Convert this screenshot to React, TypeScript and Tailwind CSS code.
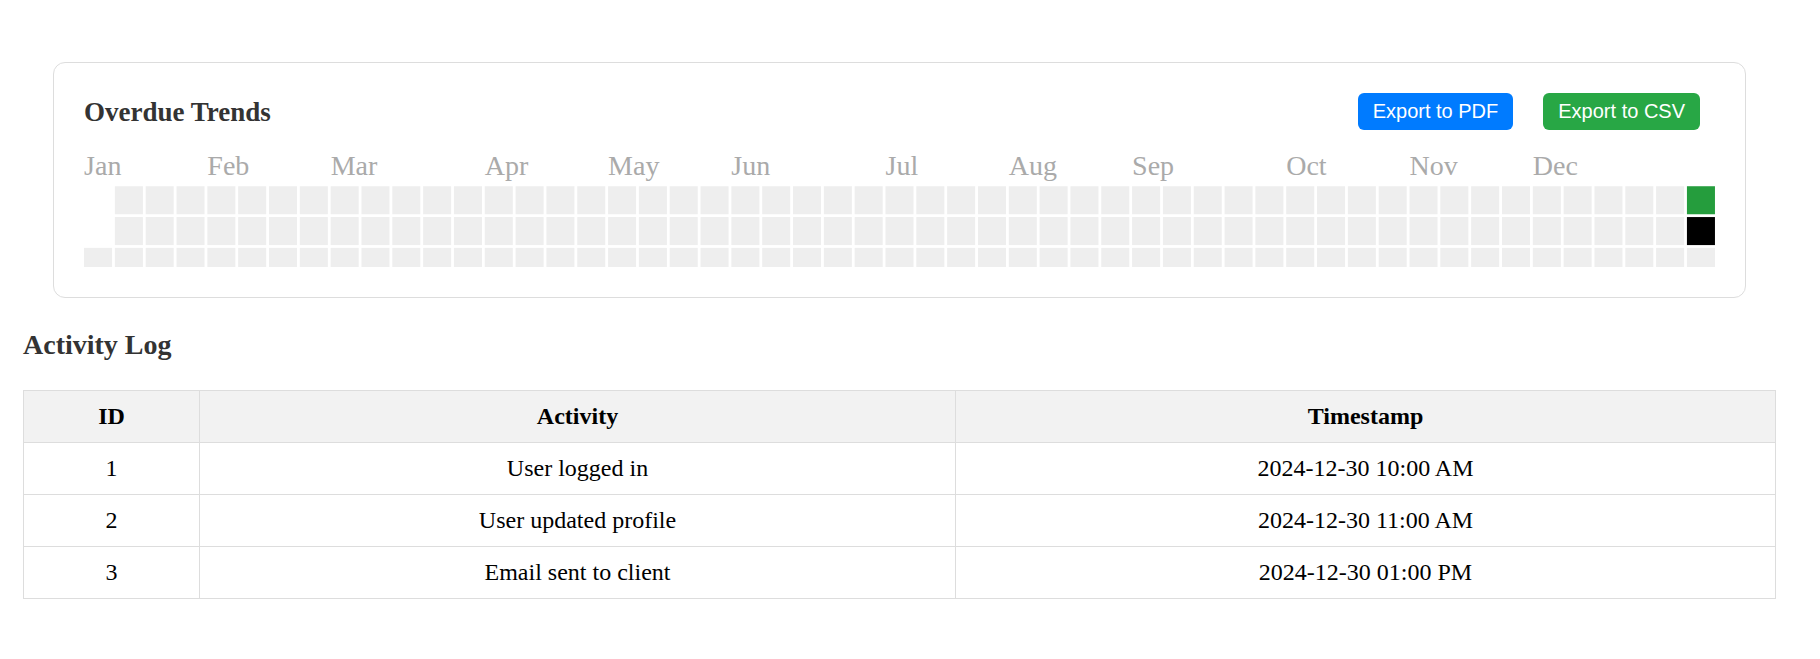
import React from "react"

interface LogRow {
  id: number
  activity: string
  timestamp: string
}

const rows: LogRow[] = [
  { id: 1, activity: "User logged in", timestamp: "2024-12-30 10:00 AM" },
  { id: 2, activity: "User updated profile", timestamp: "2024-12-30 11:00 AM" },
  { id: 3, activity: "Email sent to client", timestamp: "2024-12-30 01:00 PM" },
]

// week index where each month label sits (same rule as react-calendar-heatmap)
const monthLabels: [string, number][] = [
  ["Jan", 0],
  ["Feb", 4],
  ["Mar", 8],
  ["Apr", 13],
  ["May", 17],
  ["Jun", 21],
  ["Jul", 26],
  ["Aug", 30],
  ["Sep", 34],
  ["Oct", 39],
  ["Nov", 43],
  ["Dec", 47],
]

const WEEKS = 53
const SQUARE = 10
const GUTTER = 1
const LABEL_SIZE = 14

function Heatmap() {
  const cells: React.ReactNode[] = []
  for (let w = 0; w < WEEKS; w++) {
    for (let d = 0; d < 7; d++) {
      // range starts on Tue Jan 2 and ends on Tue Dec 31
      if (w === 0 && d < 2) continue
      if (w === WEEKS - 1 && d > 2) continue
      let fill = "#eeeeee"
      if (w === WEEKS - 1 && d === 0) fill = "#259d3d"
      if (w === WEEKS - 1 && d === 1) fill = "#000000"
      cells.push(
        <rect
          key={`${w}-${d}`}
          x={w * (SQUARE + GUTTER)}
          y={d * (SQUARE + GUTTER)}
          width={SQUARE}
          height={SQUARE}
          fill={fill}
        />
      )
    }
  }

  const width = WEEKS * (SQUARE + GUTTER) - GUTTER
  const height = 7 * (SQUARE + GUTTER) - GUTTER + LABEL_SIZE

  return (
    <div className="mt-[17px] h-[120px] overflow-hidden">
      <svg className="block w-full" viewBox={`0 0 ${width} ${height}`}>
        <g>
          {monthLabels.map(([label, week]) => (
            <text key={label} x={week * (SQUARE + GUTTER)} y={10} fontSize={10} fill="#aaaaaa">
              {label}
            </text>
          ))}
        </g>
        <g transform={`translate(0, ${LABEL_SIZE})`}>{cells}</g>
      </svg>
    </div>
  )
}

export default function App() {
  return (
    <div className="min-h-screen bg-white pl-[23px] pr-[44px] pt-[62px] font-['Liberation_Serif',serif]">
      <div className="ml-[30px] mr-[30px] rounded-[12px] border border-[#dddddd] p-[30px]">
        <div className="flex items-center justify-between">
          <h3 className="text-[27px] font-bold leading-[30px] text-[#333333]">Overdue Trends</h3>
          <div className="flex items-center">
            <button className="mx-[15px] h-[37px] rounded-[6px] bg-[#007bff] px-[15px] font-['Liberation_Sans',Arial,sans-serif] text-[20px] leading-[23px] text-white">
              Export to PDF
            </button>
            <button className="mx-[15px] h-[37px] rounded-[6px] bg-[#28a745] px-[15px] font-['Liberation_Sans',Arial,sans-serif] text-[20px] leading-[23px] text-white">
              Export to CSV
            </button>
          </div>
        </div>
        <Heatmap />
      </div>

      <h3 className="mt-[31px] text-[28px] font-bold leading-[32px] text-[#333333]">Activity Log</h3>

      <table className="mt-[29px] w-full border-collapse text-[24px] leading-[27px] text-black">
        <thead>
          <tr className="bg-[#f2f2f2]">
            <th className="w-[176px] border border-[#dddddd] py-3 font-bold">ID</th>
            <th className="w-[756px] border border-[#dddddd] py-3 font-bold">Activity</th>
            <th className="border border-[#dddddd] py-3 font-bold">Timestamp</th>
          </tr>
        </thead>
        <tbody>
          {rows.map((row) => (
            <tr key={row.id}>
              <td className="border border-[#dddddd] py-3 text-center">{row.id}</td>
              <td className="border border-[#dddddd] py-3 text-center">{row.activity}</td>
              <td className="border border-[#dddddd] py-3 text-center">{row.timestamp}</td>
            </tr>
          ))}
        </tbody>
      </table>
    </div>
  )
}
